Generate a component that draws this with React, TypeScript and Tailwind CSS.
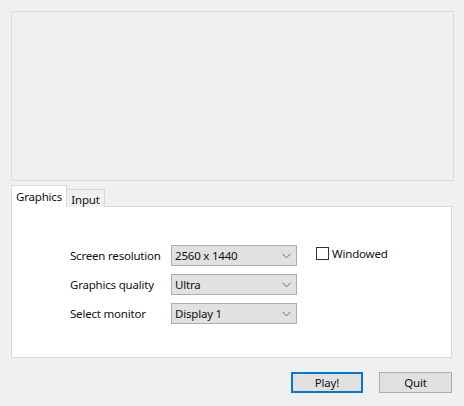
import React from "react";

function Chevron() {
  return (
    <svg width="9" height="6" viewBox="0 0 9 6" className="mr-[5px]">
      <path d="M0.5 0.8 L4.5 4.8 L8.5 0.8" fill="none" stroke="#6a6a6a" strokeWidth="1" />
    </svg>
  );
}

function Select({ value }: { value: string }) {
  return (
    <div className="w-[126px] h-[21px] border border-[#adadad] bg-[#e1e1e1] flex items-center justify-between pl-[3px]">
      <span>{value}</span>
      <Chevron />
    </div>
  );
}

export default function App() {
  return (
    <div
      className="w-[464px] h-[406px] bg-[#f0f0f0] text-[11.5px] tracking-[-0.2px] text-[#111111] relative overflow-hidden"
      style={{ fontFamily: '"Noto Sans", sans-serif' }}
    >
      <div className="pt-[11px] px-[11px]">
        <div className="h-[170px] border border-[#dcdcdc] bg-[#f0f0f0] w-[443px]" />
      </div>
      <div className="mt-[4px] pl-[11px] pr-[11px]">
        <div className="flex items-end h-[22px] relative z-10">
          <div className="h-[22px] w-[56px] bg-white border border-[#d9d9d9] border-b-0 flex items-start justify-center pt-[3px] leading-[15px]">
            Graphics
          </div>
          <div className="h-[18px] w-[38px] bg-[#f0f0f0] border border-[#d9d9d9] border-b-0 border-l-0 flex items-start justify-center pt-[2px] leading-[15px]">
            Input
          </div>
        </div>
        <div className="-mt-px border border-[#d9d9d9] bg-white w-[441px] h-[152px] pt-[38px] pl-[58px]">
          <div className="flex">
            <div className="flex flex-col gap-[8px]">
              <div className="flex items-center h-[21px]">
                <span className="w-[101px]">Screen resolution</span>
                <Select value="2560 x 1440" />
              </div>
              <div className="flex items-center h-[21px]">
                <span className="w-[101px]">Graphics quality</span>
                <Select value="Ultra" />
              </div>
              <div className="flex items-center h-[21px]">
                <span className="w-[101px]">Select monitor</span>
                <Select value="Display 1" />
              </div>
            </div>
            <div className="ml-[19px] flex items-start pt-[1px]">
              <div className="w-[13px] h-[13px] border border-[#333333] bg-white mt-[1px]" />
              <span className="ml-[3px] leading-[15px]">Windowed</span>
            </div>
          </div>
        </div>
      </div>
      <div className="flex justify-end pr-[12px] mt-[14px] gap-[16px]">
        <div className="w-[72px] h-[21px] bg-[#e1e1e1] border-2 border-[#0078d7] flex items-center justify-center">
          Play!
        </div>
        <div className="w-[73px] h-[21px] bg-[#e1e1e1] border border-[#adadad] flex items-center justify-center">
          Quit
        </div>
      </div>
    </div>
  );
}
